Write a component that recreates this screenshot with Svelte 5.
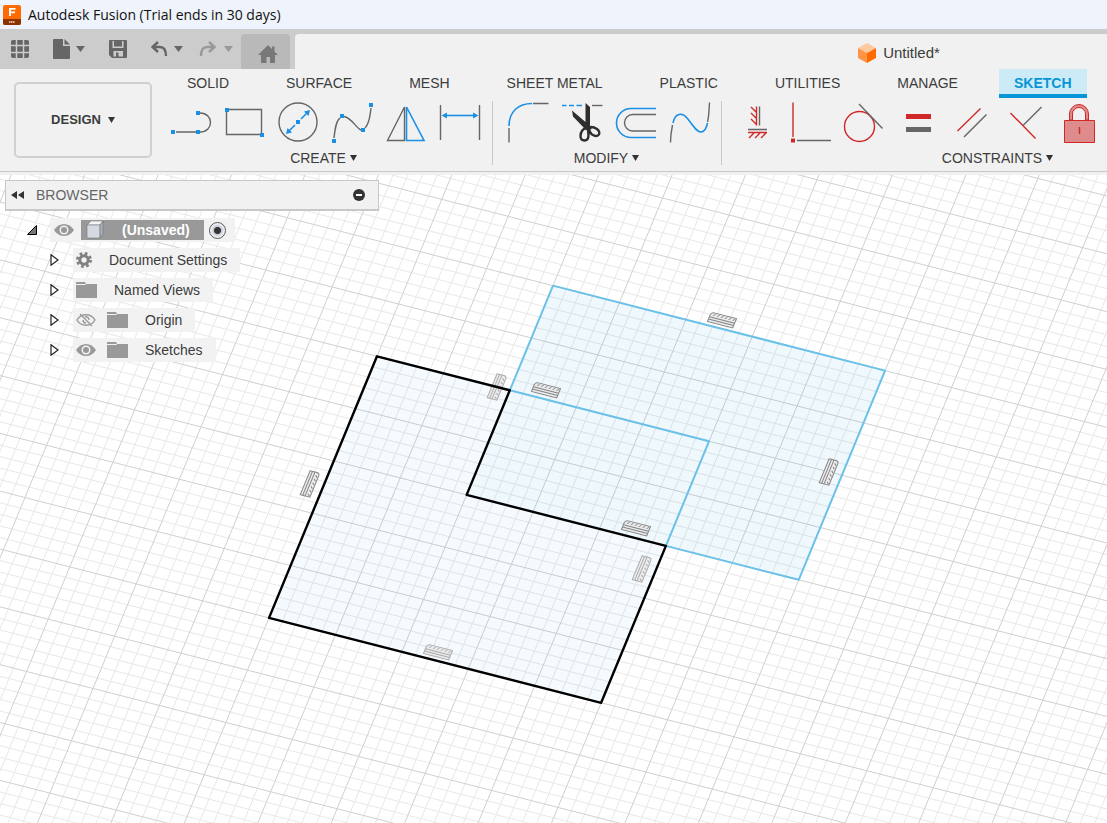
<script>
  const sq = (x, y) => `M${x - 2} ${y - 2}h4v4h-4z`;
  const circle = (x, y, r) => `M${x - r} ${y}a${r} ${r} 0 1 0 ${2 * r} 0a${r} ${r} 0 1 0 ${-2 * r} 0z`;

  // every icon is a list of [class, path] on a 54x44 cell
  const groups = [
    {
      name: 'CREATE',
      tools: [
        { name: 'Line', paths: [['gray', 'M12 31H32M36 12C50 12 50 31 36 31'], ['blueFill', sq(9, 31) + sq(34, 31) + sq(34, 12)]] },
        { name: 'Rectangle', paths: [['gray', 'M8.5 8.5H43.5V33.5H8.5z'], ['blueFill', sq(9, 9) + sq(44, 34)]] },
        {
          name: 'Circle',
          paths: [
            ['gray', circle(26, 21, 19)],
            ['blue', 'M29 18L35 12M23 24L17 30'],
            ['blueFill', sq(26, 21) + 'M38 9L36.5 15L32 10.5zM14 33L15.5 27L20 31.5z']
          ]
        },
        {
          name: 'Spline',
          paths: [
            ['gray', 'M8 37C9 28 10 20 14 17M18 15.5C26 17 30 27 35 29M39 27C44 22 44 14 45 7'],
            ['blueFill', sq(8, 40) + sq(16, 15) + sq(37, 29) + sq(45, 4)]
          ]
        },
        { name: 'Mirror', paths: [['gray', 'M24.5 6V39.5H7.5z'], ['blue', 'M26.5 6V39.5H44z']] },
        {
          name: 'Dimension',
          paths: [['gray', 'M6.5 4V39M45.5 4V39'], ['blue', 'M11 14.5H41'], ['blueFill', 'M7.5 14.5L13 11.5V17.5zM44.5 14.5L39 11.5V17.5z']]
        }
      ]
    },
    {
      name: 'MODIFY',
      tools: [
        { name: 'Fillet', paths: [['gray', 'M8 27V41.5M32 2.5H47.5'], ['blue', 'M8 25C8 11 17 2.5 31 2.5']] },
        {
          name: 'Trim',
          paths: [
            ['blue', 'M7 4.5H11.5M14 4.5H19M21.5 4.5H27'],
            ['gray', 'M37 4.5H47.5'],
            ['dark', 'M17 9.5L30.5 21V2L35 6V25L37 28L31 29L18 15.5z'],
            ['darkLine', 'M32 27C28 27 25.500 31 25.500 35C25.500 38 27 39.500 29.500 39.500C32.500 39.500 33.500 37 33.500 34C33.500 31 33.500 29 32 27zM34 26.500C36 25.500 39 26 42 28C44.500 30 45 32.500 43.500 34C42 35.500 39.500 35 37 33.500C35 32 34 30 34 26.500z']
          ]
        },
        { name: 'Offset', paths: [['blue', 'M47 7.5H22A14.5 14.5 0 0 0 22 36.5H47'], ['gray', 'M47 13.5H23.5A8 8.25 0 0 0 23.5 30H47']] },
        {
          name: 'Curve',
          paths: [
            ['gray', 'M7.5 41.5C7.5 34 8.5 29 9.5 24M44.5 21C46 16 46 8 46.5 1.5'],
            ['blue', 'M10 22C12 12 19 11 24 17C30 24 33 31 38 31C42 31 43.5 27 44.5 22']
          ]
        }
      ]
    },
    {
      name: 'CONSTRAINTS',
      tools: [
        {
          name: 'Horizontal/Vertical',
          paths: [
            ['red', 'M26.5 5.5V24.5M21 6L26 11M21 12L26 17M21 18L26 23M18 31.5H37M24 32L19 37M30 32L25 37M36 32L31 37'],
            ['gray', 'M29.5 5.5V24.5M18 28.5H37']
          ]
        },
        { name: 'Coincident', paths: [['red', 'M9 1.5V36'], ['gray', 'M13 39.5H47'], ['redFill', sq(9, 39.5)]] },
        { name: 'Tangent', paths: [['red', circle(21.5, 25.5, 15)], ['gray', 'M21 3L44.5 27.5']] },
        { name: 'Equal', paths: [['redFill', 'M14 13H39V18H14z'], ['grayFill', 'M14 26H39V31H14z']] },
        { name: 'Parallel', paths: [['red', 'M11.5 30L34.5 7.5'], ['gray', 'M18 36L40.5 13.5']] },
        { name: 'Perpendicular', paths: [['red', 'M10.5 12L35.5 37.5'], ['gray', 'M23 24.5L41.5 6']] },
        {
          name: 'Fix/Unfix',
          paths: [
            ['pink', 'M15.5 19V13A9.5 9.5 0 0 1 34.5 13V19H31.5V13A6.5 6.5 0 0 0 18.5 13V19z'],
            ['pink', 'M10.5 19.5H40.5V41.5H10.5z'],
            ['red', 'M25.5 26V33']
          ]
        }
      ]
    }
  ];

  const tabs = ['SOLID', 'SURFACE', 'MESH', 'SHEET METAL', 'PLASTIC', 'UTILITIES', 'MANAGE', 'SKETCH'];
  let active = 'SKETCH';

  const nodes = [
    { label: 'Document Settings', icon: 'gear' },
    { label: 'Named Views', icon: 'folder' },
    { label: 'Origin', icon: 'folder', eye: 'off' },
    { label: 'Sketches', icon: 'folder', eye: 'on' }
  ];

  // sketch plane: screen position of grid point (i, j)
  const pt = (i, j) => [885.1 + 66.42 * i - 21.59 * j, 195.6 + 16.99 * i + 52.31 * j];
  const poly = (points) => points.map(([i, j]) => pt(i, j).join(',')).join(' ');

  const gridLines = [];
  for (let n = -200; n <= 200; n++) {
    const major = n % 5 === 0;
    gridLines.push({ a: pt(n / 5, -40), b: pt(n / 5, 40), major });
    gridLines.push({ a: pt(-40, n / 5), b: pt(40, n / 5), major });
  }
  gridLines.sort((a, b) => a.major - b.major);

  const bluePath = [[-5, 2], [-5, 0], [0, 0], [0, 4], [-2, 4], [-2, 2], [-5, 2]];
  const blackShape = [[-7, 2], [-5, 2], [-5, 4], [-2, 4], [-2, 7], [-7, 7]];
  const blueFill = [[-5, 0], [0, 0], [0, 4], [-2, 4], [-5, 4]];

  const marks = [
    { x: 722, y: 145 },
    { x: 546, y: 215 },
    { x: 636, y: 353 },
    { x: 438, y: 477, faint: true },
    { x: 829, y: 297, upright: true },
    { x: 310, y: 309, upright: true },
    { x: 642, y: 394, upright: true, faint: true },
    { x: 497, y: 212, upright: true, faint: true }
  ];
  const place = (m) =>
    m.upright ? `matrix(-.38 .92 -.97 -.25 ${m.x} ${m.y})` : `matrix(.97 .25 -.38 .92 ${m.x} ${m.y})`;
</script>

{#snippet caret()}
  <svg class="caret" width="9" height="6" viewBox="0 0 9 6"><path d="M0 0H9L4.5 6z" /></svg>
{/snippet}

{#snippet eye(state)}
  <svg width="20" height="14" viewBox="0 0 20 14">
    {#if state === 'on'}
      <path fill="#999" d="M0 7C5-1 15-1 20 7C15 15 5 15 0 7z" />
      <circle cx="10" cy="7" r="4.5" fill="#f2f2f2" />
      <circle cx="10" cy="7" r="3" fill="#999" />
    {:else}
      <path fill="none" stroke="#999" stroke-width="1.4" d="M1 7C5 0 15 0 19 7C15 14 5 14 1 7zM4 1L16 13M7 7A3 3 0 0 0 10 10M9 4A3 3 0 0 1 13 7" />
    {/if}
  </svg>
{/snippet}

<div class="app">
  <header class="title">
    <svg width="18" height="20" viewBox="0 0 18 20">
      <rect width="18" height="20" rx="2" fill="#ff6b00" />
      <path d="M0 14H18V18Q18 20 16 20H2Q0 20 0 18z" fill="#8a3500" />
      <path d="M6 11V3H12.5V4.800H8V6.500H12V8.300H8V11z" fill="#fff" />
      <path d="M6 17H12" stroke="#e8b48c" stroke-width="2" stroke-dasharray="1.500 .5" />
    </svg>
    <span>Autodesk Fusion (Trial ends in 30 days)</span>
  </header>

  <div class="quick">
    <button class="tool" aria-label="Data panel">
      <svg width="18" height="18" viewBox="0 0 18 18">
        <rect width="18" height="18" rx="2" fill="#666" />
        <path d="M5.500 0V18M12.500 0V18M0 5.500H18M0 12.500H18" stroke="#ccc" stroke-width="1.500" />
      </svg>
    </button>
    <button class="tool" aria-label="File">
      <svg width="17" height="20" viewBox="0 0 17 20">
        <path fill="#666" d="M1 0H10V7H17V19Q17 20 16 20H1Q0 20 0 19V1Q0 0 1 0zM11.500 0L17 5.500H11.500z" />
      </svg>
      {@render caret()}
    </button>
    <button class="tool" aria-label="Save">
      <svg width="18" height="18" viewBox="0 0 18 18">
        <path fill="#666" d="M1 0H17Q18 0 18 1V17Q18 18 17 18H3L0 15V1Q0 0 1 0z" />
        <path fill="#ccc" d="M3.500 1H14.500V8H3.500zM4.500 11H14V16.500H4.500z" />
        <path fill="#666" d="M5 1H13V6.500H5zM7 12.500H9.500V18H7z" />
      </svg>
    </button>
    <button class="tool near" aria-label="Undo">
      <svg width="17" height="16" viewBox="0 0 17 16">
        <path fill="none" stroke="#666" stroke-width="2.400" d="M7 1L1.500 6L7 11M2 6H9Q15 6 15 15" />
      </svg>
      {@render caret()}
    </button>
    <button class="tool last" aria-label="Redo" disabled>
      <svg width="17" height="16" viewBox="0 0 17 16">
        <path fill="none" stroke="#999" stroke-width="2.400" d="M10 1L15.500 6L10 11M15 6H8Q2 6 2 15" />
      </svg>
      {@render caret()}
    </button>
    <button class="home" aria-label="Home">
      <svg width="20" height="18" viewBox="0 0 20 18">
        <path fill="#787878" d="M10 0L14 4V1.500H16.500V6.500L20 10H17V18H12V12H8.500V18H3V10H0z" />
      </svg>
    </button>
    <div class="doc">
      <svg width="18" height="20" viewBox="0 0 18 20">
        <path fill="#ffc9a0" d="M9 0L18 5L9 10L0 5z" />
        <path fill="#ff9444" d="M0 5L9 10V20L0 15z" />
        <path fill="#ff6b00" d="M18 5L9 10V20L18 15z" />
      </svg>
      <span>Untitled*</span>
    </div>
  </div>

  <div class="ribbon">
    <button class="workspace">DESIGN <svg width="7" height="6" viewBox="0 0 7 6"><path d="M0 0H7L3.500 6z" /></svg></button>
    <div class="main">
      <nav>
        {#each tabs as tab}
          <button class:active={tab === active} on:click={() => (active = tab)}>{tab}</button>
        {/each}
      </nav>
      <div class="groups">
        {#each groups as group}
          <section class:wide={group.name === 'CONSTRAINTS'}>
            <div class="icons">
              {#each group.tools as tool}
                <button aria-label={tool.name}>
                  <svg width="54" height="44" viewBox="0 0 54 44">
                    {#each tool.paths as [kind, d]}
                      <path class={kind} {d} />
                    {/each}
                  </svg>
                </button>
              {/each}
            </div>
            <button class="label">{group.name}<svg width="7" height="6" viewBox="0 0 7 6"><path d="M0 0H7L3.500 6z" /></svg></button>
          </section>
        {/each}
      </div>
    </div>
  </div>

  <main>
    <svg class="canvas" width="100%" height="100%">
      {#each gridLines as l}
        <line class:major={l.major} x1={l.a[0]} y1={l.a[1]} x2={l.b[0]} y2={l.b[1]} />
      {/each}
      <polygon class="blueArea" points={poly(blueFill)} />
      <polygon class="blackArea" points={poly(blackShape)} />
      <polyline class="blueEdge" points={poly(bluePath)} />
      {#each marks as m}
        <g class="mark" class:faint={m.faint} transform={place(m)}>
          <path d="M-13 5V-2Q-13 -5 -10 -5H13V5z" />
          <path d="M-13 2.500H13M-13 0H13M-10 -2L-8 -4M-6 -2L-4 -4M-2 -2L0 -4M2 -2L4 -4M6 -2L8 -4M10 -2L12 -4" />
        </g>
      {/each}
      <polygon class="blackEdge" points={poly(blackShape)} />
    </svg>

    <aside>
      <div class="panelHead">
        <svg width="13" height="8" viewBox="0 0 13 8"><path fill="#333" d="M6 0V8L0 4zM13 0V8L7 4z" /></svg>
        <span>BROWSER</span>
        <button aria-label="Collapse">
          <svg width="12" height="12" viewBox="0 0 12 12">
            <circle cx="6" cy="6" r="6" fill="#333" />
            <path d="M3 6H9" stroke="#fff" stroke-width="2" />
          </svg>
        </button>
      </div>
      <div class="row root">
        <svg width="10" height="10" viewBox="0 0 10 10"><path d="M9.500 .5V9.500H.5z" fill="#777" stroke="#000" /></svg>
        <div class="node">
          {@render eye('on')}
          <div class="selected">
            <svg width="18" height="18" viewBox="0 0 18 18">
              <path fill="#f3f5f8" stroke="#666" stroke-width=".5" d="M1 4L5 0H17L14 4z" />
              <path fill="#d5dae2" stroke="#666" stroke-width=".5" d="M1 4H14V17H2Q1 17 1 16z" />
              <path fill="#aab0ba" stroke="#666" stroke-width=".5" d="M14 4L17 0V13L14 17z" />
            </svg>
            <strong>(Unsaved)</strong>
          </div>
          <input type="radio" name="component" aria-label="Activate component" checked />
        </div>
      </div>
      {#each nodes as node}
        <div class="row">
          <svg width="9" height="12" viewBox="0 0 9 12"><path d="M1 .8L8 6L1 11.200z" fill="#fff" stroke="#222" stroke-width="1.200" /></svg>
          <div class="node">
            {#if node.eye}
              {@render eye(node.eye)}
            {/if}
            {#if node.icon === 'gear'}
              <svg width="16" height="16" viewBox="0 0 16 16">
                <circle cx="8" cy="8" r="6.500" fill="none" stroke="#808080" stroke-width="3" stroke-dasharray="2.600 2.505" />
                <circle cx="8" cy="8" r="4.200" fill="none" stroke="#808080" stroke-width="3" />
              </svg>
            {:else}
              <svg width="21" height="16" viewBox="0 0 21 16">
                <path fill="#999" d="M0 0H9L10 2H21V16H0z" />
                <path stroke="#f2f2f2" d="M0 2.500H9.500L11 1H21" fill="none" />
              </svg>
            {/if}
            <span>{node.label}</span>
          </div>
        </div>
      {/each}
    </aside>
  </main>
</div>

<style>
  :global(body) {
    margin: 0;
  }
  .app {
    display: flex;
    flex-direction: column;
    min-height: 100vh;
    overflow: hidden;
    font: 14px/20px 'Liberation Sans', Arial, sans-serif;
    color: #3c3c3c;
  }
  svg {
    display: block;
    flex: none;
  }
  button {
    font: inherit;
    color: inherit;
    background: none;
    border: none;
    padding: 0;
    cursor: pointer;
  }

  .title {
    display: flex;
    align-items: center;
    gap: 7px;
    height: 29px;
    padding-left: 3px;
    background: #eff3fb;
    color: #111;
    font-family: 'Open Sans', 'Noto Sans', sans-serif;
  }

  .quick {
    display: flex;
    align-items: center;
    height: 40px;
    padding-left: 11px;
    background: #ccc;
  }
  .tool {
    display: flex;
    align-items: center;
    gap: 6px;
    margin-right: 24px;
  }
  .tool.near {
    margin-right: 16px;
  }
  .tool.last {
    gap: 8px;
    margin-right: 8px;
  }
  .caret {
    fill: #666;
  }
  .tool:disabled .caret {
    fill: #999;
  }
  .home {
    display: flex;
    flex: none;
    align-items: center;
    justify-content: center;
    align-self: flex-end;
    width: 49px;
    height: 35px;
    padding: 4px 0 0 4px;
    box-sizing: border-box;
    margin-right: 5px;
    background: #b9b9b9;
    border-radius: 4px 4px 0 0;
  }
  .doc {
    display: flex;
    flex: 1 0 1208px;
    align-items: center;
    align-self: flex-end;
    justify-content: center;
    gap: 7px;
    height: 35px;
    padding-top: 2px;
    box-sizing: border-box;
    background: #f1f1f1;
    border-radius: 4px 0 0 0;
    font-size: 15px;
  }

  .ribbon {
    display: flex;
    height: 102px;
    border-bottom: 1px solid #c8c8c8;
    background: #f1f1f1;
  }
  .workspace {
    display: flex;
    flex: none;
    align-items: center;
    justify-content: center;
    gap: 7px;
    width: 138px;
    height: 76px;
    margin: 13px 12px 0 14px;
    border: 2px solid #d0d0d0;
    border-radius: 5px;
    font-weight: bold;
    font-size: 13px;
  }
  .workspace svg,
  .label svg {
    fill: #333;
  }
  nav {
    display: flex;
    gap: 25px;
    padding-left: 7px;
  }
  nav button {
    flex: none;
    height: 29px;
    padding: 2px 16px 0;
    border-bottom: 4px solid transparent;
    box-sizing: border-box;
    white-space: nowrap;
  }
  nav .active {
    padding: 2px 15px 0;
    background: #cdeaf7;
    border-color: #0696d7;
    color: #0696d7;
    font-weight: bold;
  }
  .groups {
    display: flex;
    padding-top: 3px;
  }
  section {
    flex: none;
    padding: 0 4px 0 8px;
    border-right: 1px solid #c8c8c8;
    height: 64px;
  }
  section:first-child {
    padding-left: 0;
  }
  section.wide {
    width: 540px;
  }
  .icons {
    display: flex;
  }
  .label {
    display: flex;
    align-items: center;
    justify-content: center;
    gap: 4px;
    width: 100%;
    padding: 3px 5px 0 0;
  }
  .gray,
  .blue,
  .red,
  .darkLine {
    fill: none;
    stroke: #666;
    stroke-width: 1.4;
  }
  .blue {
    stroke: #1b8fe6;
    stroke-width: 1.6;
  }
  .red {
    stroke: #d02828;
  }
  .darkLine {
    stroke: #2e2e2e;
    stroke-width: 2.4;
  }
  .blueFill {
    fill: #1b8fe6;
  }
  .redFill {
    fill: #d02828;
  }
  .grayFill {
    fill: #666;
  }
  .dark {
    fill: #2e2e2e;
  }
  .pink {
    fill: #dd8b8b;
    stroke: #d02828;
  }

  main {
    position: relative;
    flex: 1;
    min-height: 560px;
    border-top: 3px solid #f1f1f1;
    background: #fff;
  }
  .canvas {
    position: absolute;
    inset: 0;
  }
  line {
    stroke: #e8e8e8;
  }
  line.major {
    stroke: #d0d0d0;
  }
  .blueArea {
    fill: rgba(30, 150, 230, 0.07);
  }
  .blackArea {
    fill: rgba(30, 150, 220, 0.05);
  }
  .blueEdge,
  .blackEdge {
    fill: none;
    stroke: #6cc1e8;
    stroke-width: 2;
    stroke-linejoin: round;
  }
  .blackEdge {
    stroke: #000;
    stroke-width: 2.4;
  }
  .mark {
    fill: #ececec;
    stroke: #858585;
  }
  .mark.faint {
    stroke: #acacac;
  }

  aside {
    position: absolute;
    top: 5px;
    left: 5px;
    width: 374px;
  }
  .panelHead {
    display: flex;
    align-items: center;
    gap: 12px;
    height: 28px;
    padding: 0 13px 0 5px;
    margin-bottom: 4px;
    border: 1px solid #c8c8c8;
    border-bottom-width: 2px;
    background: #f1f1f1;
    color: #666;
  }
  .panelHead button {
    margin-left: auto;
  }
  .row {
    display: flex;
    align-items: center;
    gap: 14px;
    height: 30px;
    padding-left: 45px;
  }
  .row.root {
    gap: 13px;
    padding-left: 22px;
  }
  .node {
    display: flex;
    align-items: center;
    height: 24px;
    padding: 0 13px 0 3px;
    background: #f2f2f2;
  }
  .node span {
    padding-left: 17px;
  }
  .node svg + svg {
    margin-left: 11px;
  }
  .root .node {
    padding: 0 17px 0 4px;
    padding-right: 9px;
  }
  .selected {
    display: flex;
    align-items: center;
    gap: 18px;
    height: 20px;
    padding: 0 14px 0 5px;
    margin: 0 5px 0 7px;
    background: #999;
    color: #fff;
  }
  input {
    appearance: none;
    width: 17px;
    height: 17px;
    margin: 0;
    border: 1px solid #555;
    border-radius: 50%;
    background: radial-gradient(circle, #333 0 3px, #c4c9d6 4px, #f4f4f8 7px);
  }
</style>
